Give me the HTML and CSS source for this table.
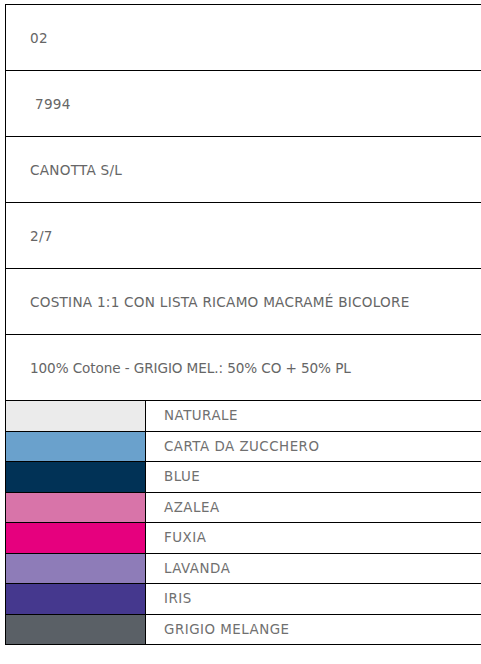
FILE: index.html
```html
<!DOCTYPE html>
<html lang="it">
<head>
<meta charset="utf-8">
<title>Scheda prodotto</title>
<link rel="stylesheet" href="styles.css">
</head>
<body>
<div class="sheet">
  <div class="row"><span class="val">02</span></div>
  <div class="row"><span class="val indent">7994</span></div>
  <div class="row"><span class="val">CANOTTA S/L</span></div>
  <div class="row"><span class="val">2/7</span></div>
  <div class="row"><span class="val">COSTINA 1:1 CON LISTA RICAMO MACRAMÉ BICOLORE</span></div>
  <div class="row"><span class="val mixed">100% Cotone - GRIGIO MEL.: 50% CO + 50% PL</span></div>
  <div class="colors">
    <div class="crow"><div class="swatch naturale"></div><div class="cname">NATURALE</div></div>
    <div class="crow"><div class="swatch carta"></div><div class="cname">CARTA DA ZUCCHERO</div></div>
    <div class="crow"><div class="swatch blue"></div><div class="cname">BLUE</div></div>
    <div class="crow"><div class="swatch azalea"></div><div class="cname">AZALEA</div></div>
    <div class="crow"><div class="swatch fuxia"></div><div class="cname">FUXIA</div></div>
    <div class="crow"><div class="swatch lavanda"></div><div class="cname">LAVANDA</div></div>
    <div class="crow"><div class="swatch iris"></div><div class="cname">IRIS</div></div>
    <div class="crow"><div class="swatch grigio"></div><div class="cname">GRIGIO MELANGE</div></div>
  </div>
</div>
</body>
</html>
```
FILE: styles.css
```css
html, body {
  margin: 0;
  padding: 0;
  background: #fff;
}
body {
  font-family: "DejaVu Sans", sans-serif;
  color: #666;
}
.sheet {
  margin: 4px 0 0 5px;
  border-left: 1px solid #000;
  border-top: 1px solid #000;
}
.row {
  height: 65px;
  border-bottom: 1px solid #000;
  display: flex;
  align-items: center;
  padding-left: 24px;
  font-size: 13.6px;
  letter-spacing: 0.25px;
  white-space: nowrap;
}
.val.indent {
  padding-left: 5px;
}
.val.mixed {
  letter-spacing: -0.1px;
}
.colors {
  display: grid;
  grid-template-rows: repeat(8, 30.5px);
}
.crow {
  display: grid;
  grid-template-columns: 140px 1fr;
  border-bottom: 1px solid #000;
}
.swatch {
  border-right: 1px solid #000;
}
.cname {
  display: flex;
  align-items: center;
  padding-left: 18px;
  font-size: 13.4px;
  letter-spacing: 0.5px;
  color: #707070;
}
.naturale { background: #ebebeb; }
.carta { background: #6aa1cc; }
.blue { background: #013256; }
.azalea { background: #d874a9; }
.fuxia { background: #e6007e; }
.lavanda { background: #8e7cb8; }
.iris { background: #45388e; }
.grigio { background: #5a6066; }
```
